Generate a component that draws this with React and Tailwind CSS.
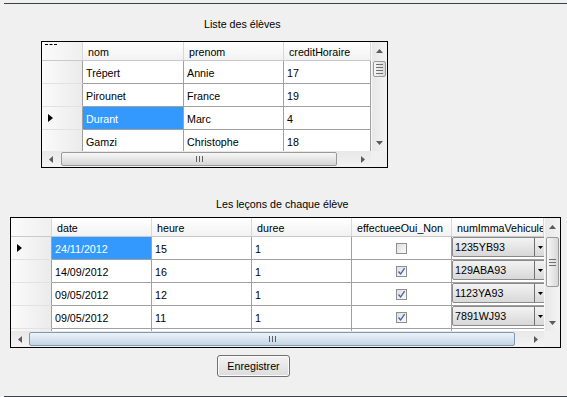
const students = [
  ['Trépert', 'Annie', '17'],
  ['Pirounet', 'France', '19'],
  ['Durant', 'Marc', '4'],
  ['Gamzi', 'Christophe', '18'],
]

const lessons = [
  { date: '24/11/2012', heure: '15', duree: '1', done: false, vehicule: '1235YB93' },
  { date: '14/09/2012', heure: '16', duree: '1', done: true, vehicule: '129ABA93' },
  { date: '09/05/2012', heure: '12', duree: '1', done: true, vehicule: '1123YA93' },
  { date: '09/05/2012', heure: '11', duree: '1', done: true, vehicule: '7891WJ93' },
  null,
]

function Tri({ dir }) {
  const vertical = dir === 'up' || dir === 'down'
  const pts = { up: '0,4 3.5,0 7,4', down: '0,0 7,0 3.5,4', left: '4,0 4,7 0,3.5', right: '0,0 4,3.5 0,7' }[dir]
  return (
    <svg width={vertical ? 7 : 4} height={vertical ? 4 : 7} viewBox={vertical ? '0 0 7 4' : '0 0 4 7'}>
      <polygon points={pts} fill="#5a5a5a" />
    </svg>
  )
}

function RowArrow() {
  return (
    <svg width="5" height="8" viewBox="0 0 5 8">
      <polygon points="0,0 5,4 0,8" fill="#000" />
    </svg>
  )
}

function VScroll({ thumbClass, lines }) {
  return (
    <div className="flex w-[16px] flex-col border-l border-[#f8f8f8] bg-gradient-to-r from-[#e8e8e8] to-[#f3f3f3]">
      <div className="flex h-[17px] items-center justify-center">
        <Tri dir="up" />
      </div>
      <div className="flex-1">
        <div className={thumbClass}>
          {Array.from({ length: lines }).map((_, i) => (
            <div key={i} className="h-px w-[7px] bg-[#707070]" />
          ))}
        </div>
      </div>
      <div className="flex h-[17px] items-center justify-center">
        <Tri dir="down" />
      </div>
    </div>
  )
}

function HScroll({ className, thumbClass }) {
  return (
    <div className={className}>
      <div className="flex w-[17px] items-center justify-center">
        <Tri dir="left" />
      </div>
      <div className={thumbClass}>
        <div className="h-[6px] w-px bg-[#606060]" />
        <div className="h-[6px] w-px bg-[#606060]" />
        <div className="h-[6px] w-px bg-[#606060]" />
      </div>
      <div className="ml-auto flex w-[17px] items-center justify-center">
        <Tri dir="right" />
      </div>
    </div>
  )
}

function CheckBox({ checked }) {
  return (
    <div className="flex h-[11px] w-[11px] items-center justify-center border border-[#8e8f8f] bg-gradient-to-br from-[#dedede] to-[#fbfbfb]">
      {checked && (
        <svg width="9" height="9" viewBox="0 0 9 9">
          <path d="M1.5 4.5 L3.6 7 L7.6 1.2" stroke="#4060a8" strokeWidth="1.3" fill="none" />
        </svg>
      )}
    </div>
  )
}

function Combo({ value }) {
  return (
    <div className="flex h-[20px] w-[104px] rounded-[2px] border border-[#8a8a8a] bg-gradient-to-b from-[#f3f3f3] to-[#d8d8d8]">
      <div className="flex w-[81px] items-center pl-[2px]">{value}</div>
      <div className="flex w-[14px] items-center border-l border-[#707070] pl-[3px]">
        <svg width="5" height="3" viewBox="0 0 5 3">
          <polygon points="0,0 5,0 2.5,3" fill="#000" />
        </svg>
      </div>
    </div>
  )
}

const headCell = 'flex items-center border-r border-[#d8d8d8] pl-[5px] pt-[2px] overflow-hidden whitespace-nowrap'
const cell = 'flex items-center border-r border-b border-[#a0a0a0] pl-[3px] pt-[2px] overflow-hidden whitespace-nowrap'
const rowHead = 'flex w-[41px] shrink-0 items-center border-r border-b border-r-[#a0a0a0] border-b-[#e2e2e2] bg-gradient-to-r from-[#fbfbfb] to-[#ebebeb] pl-[6px]'

export default function App() {
  return (
    <div className="h-[397px] w-[567px] overflow-hidden bg-[#f0f0f0] pl-[4px] pt-[3px] font-['Liberation_Sans',Arial,sans-serif] text-[10.7px] text-black">
      <div className="flex h-[394px] flex-col border-y border-[#3c414c]">
        <p className="ml-[200px] mt-[14px] leading-[13px]">Liste des élèves</p>

        <div className="ml-[37px] mt-[10px] flex h-[127px] w-[347px] flex-col border border-black bg-[#f0f0f0]">
          <div className="flex h-[109px]">
            <div className="flex w-[329px] flex-col overflow-hidden bg-white">
              <div className="flex h-[19px] shrink-0 border-b border-[#c9c9c9] bg-gradient-to-b from-white to-[#f2f2f2]">
                <div className="w-[41px] border-r border-[#d8d8d8] bg-gradient-to-r from-[#fbfbfb] to-[#efefef]">
                  <div className="ml-[3px] mt-[2px] w-[12px] border-t border-dashed border-black" />
                </div>
                <div className={`${headCell} w-[101px]`}>nom</div>
                <div className={`${headCell} w-[100px]`}>prenom</div>
                <div className={`${headCell} flex-1`}>creditHoraire</div>
              </div>
              {students.map(([nom, prenom, credit], i) => (
                <div key={nom} className="flex h-[23px] shrink-0">
                  <div className={rowHead}>{i === 2 && <RowArrow />}</div>
                  <div className={`${cell} w-[101px] ${i === 2 ? 'bg-[#3399ff] text-white' : ''}`}>{nom}</div>
                  <div className={`${cell} w-[100px]`}>{prenom}</div>
                  <div className={`${cell} flex-1`}>{credit}</div>
                </div>
              ))}
            </div>
            <VScroll
              lines={4}
              thumbClass="mx-px mt-[2px] flex h-[16px] flex-col items-center justify-center gap-[2px] rounded-[2px] border border-[#9a9a9a] bg-gradient-to-r from-[#f7f7f7] to-[#d8d8d8]"
            />
          </div>
          <div className="flex h-[16px]">
            <HScroll
              className="flex w-[329px] bg-gradient-to-b from-[#e8e8e8] to-[#f3f3f3]"
              thumbClass="my-px ml-[2px] flex w-[276px] items-center justify-center gap-[2px] rounded-[2px] border border-[#9a9a9a] bg-gradient-to-b from-[#f7f7f7] to-[#d6d6d6]"
            />
            <div className="w-[16px] bg-[#f0f0f0]" />
          </div>
        </div>

        <p className="ml-[212px] mt-[30px] leading-[13px]">Les leçons de chaque élève</p>

        <div className="ml-[6px] mt-[6px] flex h-[131px] w-[551px] flex-col border border-black bg-[#f0f0f0]">
          <div className="flex h-[113px]">
            <div className="flex w-[533px] flex-col overflow-hidden bg-white">
              <div className="flex h-[19px] shrink-0 border-b border-[#c9c9c9] bg-gradient-to-b from-white to-[#f2f2f2]">
                <div className="w-[41px] border-r border-[#d8d8d8] bg-gradient-to-r from-[#fbfbfb] to-[#efefef]" />
                <div className={`${headCell} w-[100px]`}>date</div>
                <div className={`${headCell} w-[100px]`}>heure</div>
                <div className={`${headCell} w-[100px]`}>duree</div>
                <div className={`${headCell} w-[100px]`}>effectueeOui_Non</div>
                <div className={`${headCell} flex-1`}>numImmaVehicule</div>
              </div>
              {lessons.map((l, i) => (
                <div key={i} className="flex h-[23px] shrink-0">
                  <div className={rowHead}>{i === 0 && <RowArrow />}</div>
                  <div className={`${cell} w-[100px] ${i === 0 ? 'bg-[#3399ff] text-white' : ''}`}>{l?.date}</div>
                  <div className={`${cell} w-[100px]`}>{l?.heure}</div>
                  <div className={`${cell} w-[100px]`}>{l?.duree}</div>
                  <div className="flex w-[100px] items-center justify-center border-r border-b border-[#a0a0a0]">
                    {l && <CheckBox checked={l.done} />}
                  </div>
                  <div className="flex-1 overflow-hidden border-b border-[#a0a0a0]">
                    {l && <Combo value={l.vehicule} />}
                  </div>
                </div>
              ))}
            </div>
            <VScroll
              lines={3}
              thumbClass="mx-px mt-[2px] flex h-[50px] flex-col items-center justify-center gap-[2px] rounded-[2px] border border-[#9a9a9a] bg-gradient-to-r from-[#f7f7f7] to-[#d8d8d8]"
            />
          </div>
          <div className="flex h-[16px]">
            <HScroll
              className="flex w-[533px] bg-gradient-to-b from-[#e8e8e8] to-[#f3f3f3]"
              thumbClass="my-px ml-px flex w-[486px] items-center justify-center gap-[2px] rounded-[2px] border border-[#8199ad] bg-gradient-to-b from-[#edf3f8] to-[#c3d6e5]"
            />
            <div className="w-[16px] bg-[#f0f0f0]" />
          </div>
        </div>

        <button className="ml-[213px] mt-[7px] h-[22px] w-[73px] rounded-[3px] border border-[#707070] bg-gradient-to-b from-[#f3f3f3] to-[#dcdcdc] shadow-[inset_0_0_0_1px_#fbfbfb]">
          Enregistrer
        </button>
      </div>
    </div>
  )
}
